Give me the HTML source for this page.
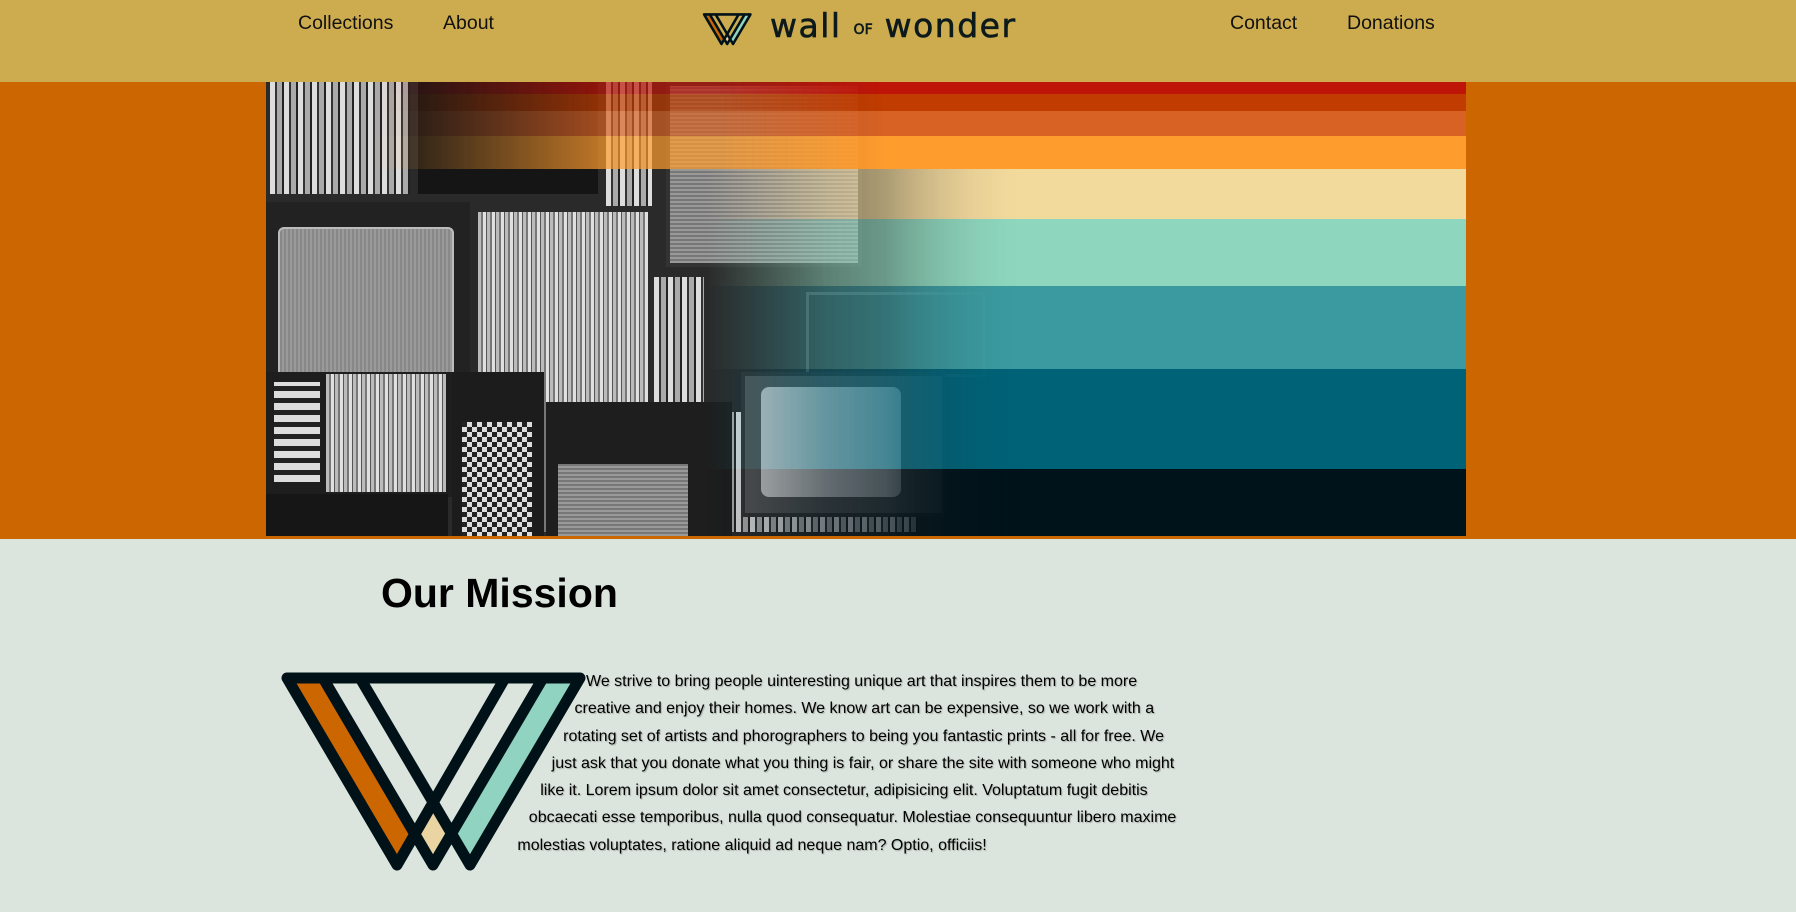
<!DOCTYPE html>
<html><head><meta charset="utf-8"><style>
*{margin:0;padding:0;box-sizing:border-box}
body{width:1796px;height:912px;background:#DCE5DD;font-family:"Liberation Sans",sans-serif;position:relative;overflow:hidden}
header{position:absolute;left:0;top:0;width:1796px;height:82px;background:#CDAB4F}
.nav{position:absolute;top:12px;font-size:19.5px;color:#111}
.hero{position:absolute;left:0;top:82px;width:1796px;height:457px;background:#CC6600}
.img{position:absolute;left:266px;top:0;width:1200px;height:454px;overflow:hidden;background:#111}
.s{position:absolute;left:0;width:1200px}
.ph{position:absolute;left:0;top:0;width:1200px;height:454px;-webkit-mask-image:linear-gradient(to right,#000 620px,transparent 770px);mask-image:linear-gradient(to right,#000 620px,transparent 770px)}
.b{position:absolute}
.cas{background:repeating-linear-gradient(90deg,#ddd 0 5px,#333 5px 7px,#aaa 7px 12px,#222 12px 14px)}
.rec{background:repeating-linear-gradient(90deg,#bbb 0 3px,#777 3px 5px,#e0e0e0 5px 8px,#555 8px 9px)}
.gr{background:repeating-linear-gradient(0deg,#999 0 2px,#777 2px 4px)}
.ov{position:absolute;left:0;top:0;width:1200px;height:454px;-webkit-mask-image:linear-gradient(to right,transparent 440px,rgba(0,0,0,.5) 560px,#000 760px);mask-image:linear-gradient(to right,transparent 440px,rgba(0,0,0,.5) 560px,#000 760px)}
.ov2{position:absolute;left:0;top:0;width:1200px;height:87px;-webkit-mask-image:linear-gradient(to right,transparent 110px,rgba(0,0,0,.7) 330px,rgba(0,0,0,.7) 450px,#000 620px);mask-image:linear-gradient(to right,transparent 110px,rgba(0,0,0,.7) 330px,rgba(0,0,0,.7) 450px,#000 620px)}
h1{position:absolute;left:381px;top:570px;font-size:41px;font-weight:bold;color:#000}
.txt{position:absolute;left:280px;top:668px;width:900px;font-size:16px;line-height:27.3px;color:#000;text-shadow:1px 1px 1px rgba(0,0,0,.25)}
.fl{float:left;width:310px;height:210px;shape-outside:polygon(0 0,306px 0,218px 210px,0 210px)}
</style></head><body>
<header>
<div class="nav" style="left:298px">Collections</div>
<div class="nav" style="left:443px">About</div>
<div class="nav" style="left:1230px">Contact</div>
<div class="nav" style="left:1347px">Donations</div>
<svg style="position:absolute;left:701px;top:10px" width="53" height="38" viewBox="0 0 330 240">
<polygon points="17,28 53,28 145,185 127,215" fill="#CC6600"/><polygon points="273,28 310,28 200,215 182,185" fill="#8FD3C0"/>
<polygon points="163,160 177,185 163,210 149,185" fill="#EAD5A2"/>
<g fill="none" stroke="#001218" stroke-width="16" stroke-linejoin="round" stroke-linecap="round">
<path d="M17 28H310L200 215L90 28M17 28L127 215L235 28M53 28L163 215L273 28"/></g></svg>
<div style="position:absolute;left:770px;top:6px;font-size:33px;color:#0d1a1c;letter-spacing:1.5px;font-family:'DejaVu Sans',sans-serif;-webkit-text-stroke:0.6px #0d1a1c">wall <span style="font-size:14px;letter-spacing:0;vertical-align:3px">OF</span> wonder</div>
</header>
<div class="hero"><div class="img">
<div class="s" style="top:0;height:12px;background:#BF1508"></div>
<div class="s" style="top:0;height:3px;background:#A51A1E"></div>
<div class="s" style="top:12px;height:17px;background:#C13C00"></div>
<div class="s" style="top:29px;height:25px;background:#D86224"></div>
<div class="s" style="top:54px;height:33px;background:#FF9C2E"></div>
<div class="s" style="top:87px;height:50px;background:#F2D99C"></div>
<div class="s" style="top:137px;height:67px;background:#8ED6BD"></div>
<div class="s" style="top:204px;height:83px;background:#3A9A9F"></div>
<div class="s" style="top:287px;height:100px;background:#006277"></div>
<div class="s" style="top:387px;height:67px;background:#00121A"></div>
<div class="ph">
<div class="b" style="left:0;top:0;width:1200px;height:454px;background:#2a2a2a"></div>
<div class="b cas" style="left:4px;top:0;width:140px;height:112px"></div>
<div class="b" style="left:152px;top:0;width:180px;height:112px;background:#151515"></div>
<div class="b cas" style="left:340px;top:0;width:46px;height:124px"></div>
<div class="b gr" style="left:400px;top:0;width:196px;height:185px;border:4px solid #333"></div>
<div class="b" style="left:0;top:120px;width:204px;height:290px;background:#222"></div>
<div class="b gr" style="left:12px;top:145px;width:176px;height:245px;border:2px solid #bbb;border-radius:6px;background:repeating-linear-gradient(90deg,#888 0 2px,#9a9a9a 2px 4px)"></div>
<div class="b rec" style="left:212px;top:130px;width:170px;height:320px"></div>
<div class="b cas" style="left:388px;top:195px;width:50px;height:250px"></div>
<div class="b" style="left:442px;top:200px;width:94px;height:125px;background:#2a2a2a"></div>
<div class="b" style="left:540px;top:210px;width:180px;height:85px;background:#2b2b2b;border:3px solid #555"></div>
<div class="b cas" style="left:442px;top:330px;width:210px;height:120px"></div>
<div class="b" style="left:0;top:290px;width:186px;height:125px;background:#1e1e1e"></div>
<div class="b rec" style="left:60px;top:292px;width:120px;height:118px"></div>
<div class="b cas" style="left:8px;top:300px;width:46px;height:100px;background:repeating-linear-gradient(0deg,#ddd 0 7px,#222 7px 12px)"></div>
<div class="b" style="left:0;top:412px;width:182px;height:42px;background:#161616"></div>
<div class="b" style="left:186px;top:290px;width:92px;height:164px;background:#1c1c1c"></div>
<div class="b" style="left:196px;top:340px;width:70px;height:114px;background:repeating-conic-gradient(#ddd 0 25%,#222 0 50%) 0 0/10px 10px"></div>
<div class="b" style="left:280px;top:320px;width:186px;height:134px;background:#1e1e1e"></div>
<div class="b gr" style="left:292px;top:382px;width:130px;height:72px"></div>
<div class="b" style="left:475px;top:290px;width:205px;height:145px;background:#555;border:4px solid #333"></div>
<div class="b" style="left:495px;top:305px;width:140px;height:110px;background:#c8c8c8;border-radius:8px"></div>
</div>
<div class="ov">
<div class="s" style="top:87px;height:50px;background:#F2D99C"></div>
<div class="s" style="top:137px;height:67px;background:#8ED6BD"></div>
<div class="s" style="top:204px;height:83px;background:#3A9A9F"></div>
<div class="s" style="top:287px;height:100px;background:#006277"></div>
<div class="s" style="top:387px;height:67px;background:#00121A"></div>
</div>
<div class="ov2">
<div class="s" style="top:0;height:12px;background:#BF1508"></div>
<div class="s" style="top:12px;height:17px;background:#C13C00"></div>
<div class="s" style="top:29px;height:25px;background:#D86224"></div>
<div class="s" style="top:54px;height:33px;background:#FF9C2E"></div>
</div>
</div></div>
<h1>Our Mission</h1>
<svg style="position:absolute;left:270px;top:650px" width="330" height="240" viewBox="0 0 330 240">
<polygon points="17,28 53,28 145,185 127,215" fill="#CC6600"/><polygon points="273,28 310,28 200,215 182,185" fill="#8FD3C0"/>
<polygon points="163,160 177,185 163,210 149,185" fill="#EAD5A2"/>
<g fill="none" stroke="#001218" stroke-width="11" stroke-linejoin="round" stroke-linecap="round">
<path d="M17 28H310L200 215L90 28M17 28L127 215L235 28M53 28L163 215L273 28"/></g></svg>
<div class="txt"><div class="fl"></div>We strive to bring people uinteresting unique art that inspires them to be more creative and enjoy their homes. We know art can be expensive, so we work with a rotating set of artists and phorographers to being you fantastic prints - all for free. We just ask that you donate what you thing is fair, or share the site with someone who might like it. Lorem ipsum dolor sit amet consectetur, adipisicing elit. Voluptatum fugit debitis obcaecati esse temporibus, nulla quod consequatur. Molestiae consequuntur libero maxime molestias voluptates, ratione aliquid ad neque nam? Optio, officiis!</div>
</body></html>
